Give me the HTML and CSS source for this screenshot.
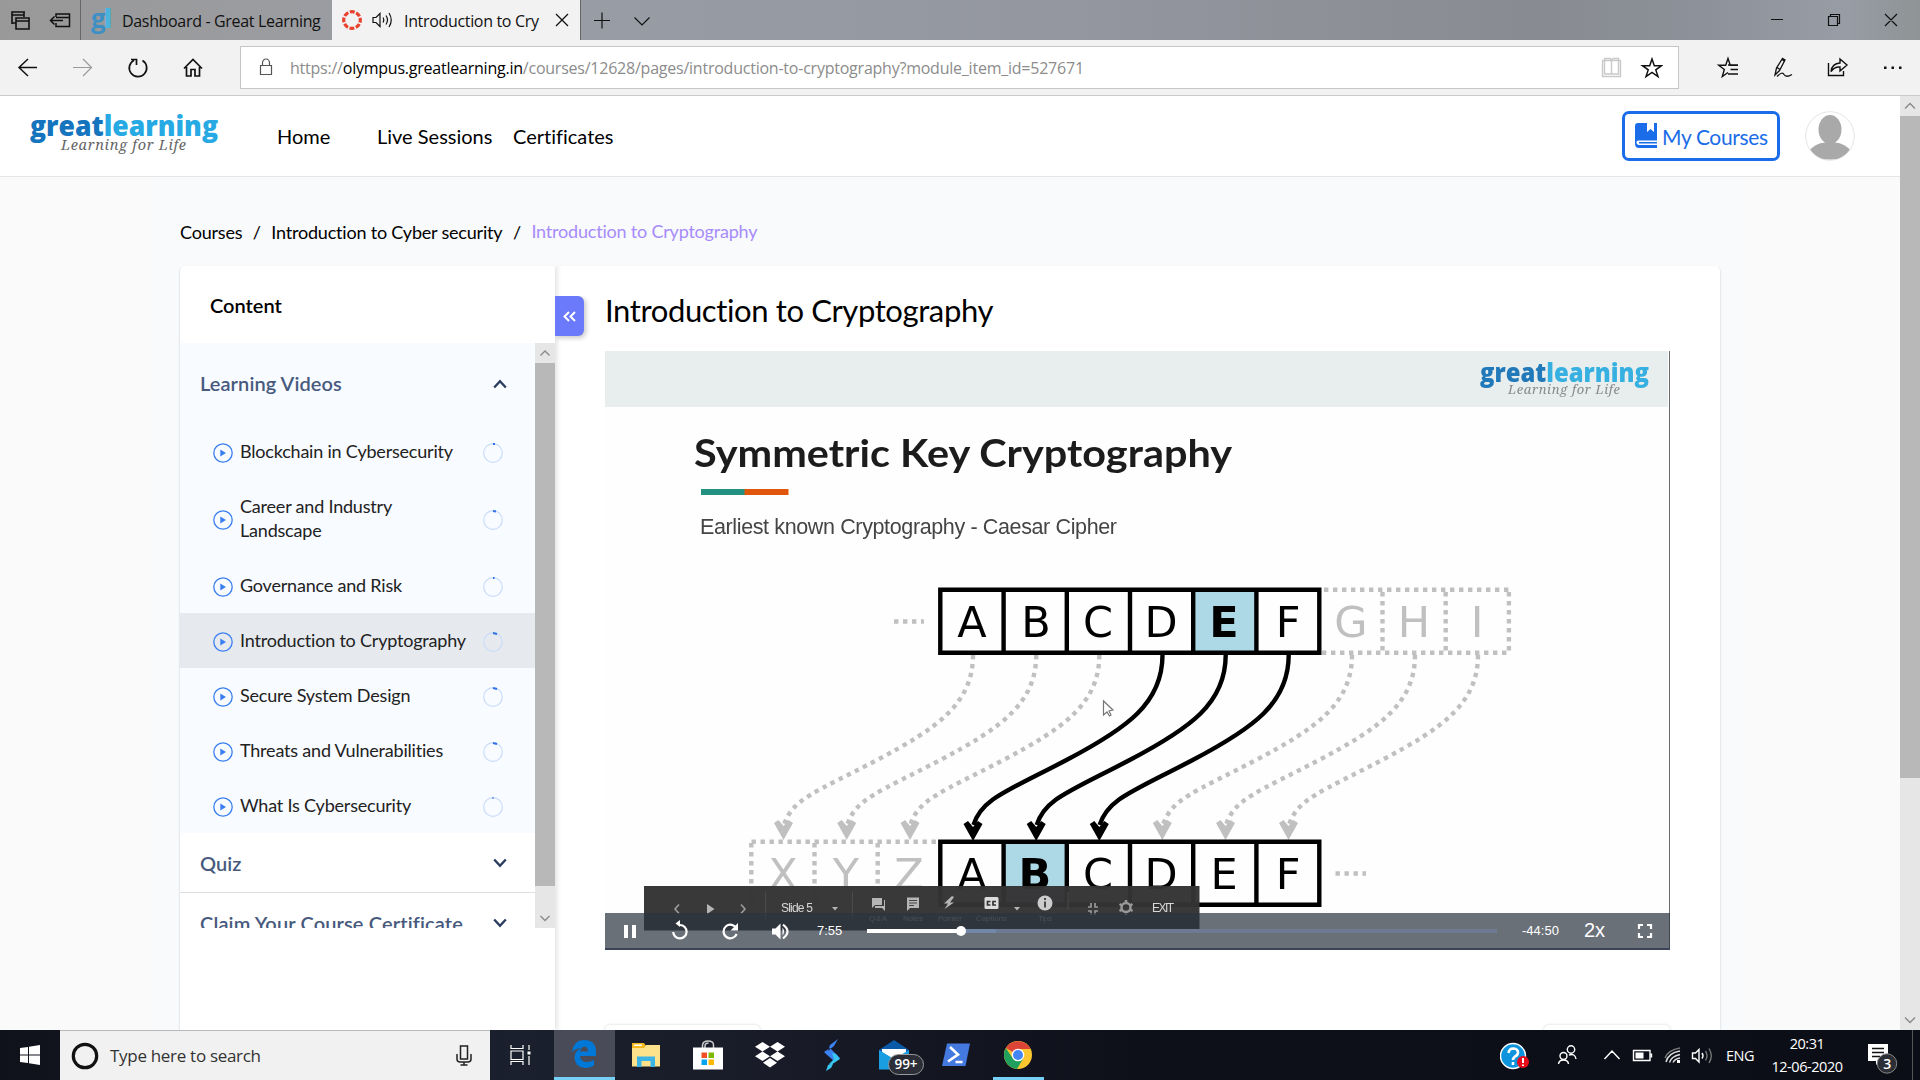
FILE: index.html
```html
<!DOCTYPE html>
<html lang="en">
<head>
<meta charset="utf-8">
<title>Introduction to Cryptography</title>
<link rel="stylesheet" href="styles.css">
</head>
<body>
<div class="desktop">
  <div class="tabstrip">
    <div class="strip-tools">
      <svg width="80" height="40" class="ic"><path d="M12 24V12H25M12 12V23H16M12 15H24V17M16 18H29V29H16ZM16 21H29M24 12V15" stroke-width="1.6"/><path d="M56 17V14H69.500V26.500H56V23M56 17.500H69M50.500 20.500H63M54.500 16.500L50.500 20.500L54.500 24.500" stroke-width="1.5"/></svg>
    </div>
    <div class="tab tab-idle">
      <span class="gl">g<b>l</b></span>
      <span class="tab-text">Dashboard - Great Learning</span>
    </div>
    <div class="tab tab-live">
      <svg width="20" height="20" viewBox="0 0 20 20"><circle cx="10" cy="10" r="8.300" fill="none" stroke="#e8422f" stroke-width="3.200" stroke-dasharray="4.920 1.600" stroke-dashoffset="2.460"/></svg>
      <svg class="ic speaker" width="22" height="20" viewBox="0 0 22 20"><path d="M1 7.500H4L8 3.500V16.500L4 12.500H1ZM11 7.500Q12.500 10 11 12.500M14 5.500Q17 10 14 14.500M17 3Q21.500 10 17 17"/></svg>
      <span class="tab-text live-text">Introduction to Cry</span>
      <svg class="ic" width="14" height="14" viewBox="0 0 14 14"><path d="M1 1L13 13M13 1L1 13" stroke-width="1.300"/></svg>
    </div>
    <svg class="ic strip-add" width="60" height="20" viewBox="0 0 60 20"><path d="M1 10.500H17M9 2.500V18.500M41.500 7.500L49 15L56.500 7.500" stroke-width="1.200"/></svg>
    <svg class="ic win-controls" width="130" height="20" viewBox="0 0 130 20"><path d="M1 9.500H13M58.500 6.500H67.500V15.500H58.500ZM60.500 6V4.500H69.500V13.500H68M115 4L127 16M127 4L115 16" stroke-width="1.200"/></svg>
  </div>

  <div class="toolbar">
    <svg class="ic nav-icons" width="240" height="44" viewBox="0 0 240 44">
      <path d="M19 21.500H37M28 13L19 21.500L28 30" stroke-width="1.500"/>
      <path d="M73 21.500H91.500M83 13L91.500 21.500L83 30" stroke="#9a9a9a" stroke-width="1.200"/>
      <path d="M134 14.200A8.700 8.700 0 1 0 142.500 14.500M131 13.500H136.500V19" stroke-width="1.700"/>
      <path d="M184 22.500L193 13.500L202 22.500M186.500 21V30H191V23.500H195V30H199.500V21" stroke-width="1.700"/>
    </svg>
    <div class="address">
      <svg class="ic lock" width="14" height="18" viewBox="0 0 14 18"><path d="M1.500 7.500H12.500V16.500H1.500ZM3.500 7V5A3.500 4 0 0 1 10.500 5V7" stroke="#555" stroke-width="1.200"/></svg>
      <span class="url">https://<b>olympus.greatlearning.in</b>/courses/12628/pages/introduction-to-cryptography?module_item_id=527671</span>
      <svg class="ic addr-end" width="62" height="22" viewBox="0 0 62 22"><path d="M1.500 3.500H19.500V19.500H1.500ZM3.500 1.500H9L10.500 3L12 1.500H17.500V17H3.500ZM10.500 3V17" stroke="#c9c9c9" stroke-width="1.400"/><path d="M51 2L53.300 8.700H60.500L54.800 12.900L57 19.500L51 15.400L45 19.500L47.200 12.900L41.500 8.700H48.700Z" stroke-width="1.500"/></svg>
    </div>
    <svg class="ic tool-end" width="241" height="44" viewBox="0 0 241 44">
      <path d="M59 19.300H51.300L49 12.500L46.700 19.300H39.700L45.300 23.500L43.300 30.500L49 26.500M49 19H59M51.500 23.500H59M49 28H59" stroke-width="1.400"/>
      <path d="M96 29L97.500 22L103.500 12.500L106 14L100.500 24.500L96 29ZM98 21.500L101 23.500M103 13L105 15M98 30.500Q103.500 25 105 28.500Q107 32 113 28.500" stroke-width="1.300"/>
      <path d="M149.500 17V29.500H164.500V25M152 25.500Q153 17.500 161 17V13L168 19L161 25V21Q155.500 20.500 152 25.500Z" stroke-width="1.400"/>
      <path d="M205 20.500H207.500V23H205ZM212.500 20.500H215V23H212.500ZM220 20.500H222.500V23H220Z" fill="#111" stroke="none"/>
    </svg>
  </div>

  <div class="viewport">
    <div class="page">
      <header class="site-head">
        <svg class="logo" width="190" height="42" viewBox="0 0 190 42">
          <text class="logo-word" x="0" y="22" textLength="188" lengthAdjust="spacingAndGlyphs"><tspan fill="#1474bd">great</tspan><tspan fill="#27aae3">learning</tspan></text>
          <text class="logo-tag" x="31" y="36" textLength="125">Learning for Life</text>
        </svg>
        <nav class="nav"><a class="n1">Home</a><a class="n2">Live Sessions</a><a class="n3">Certificates</a></nav>
        <a class="my-courses">
          <svg width="22" height="26" viewBox="0 0 22 26"><path fill="#1a6ce8" fill-rule="evenodd" d="M3 0H12V9L15.500 6L19 9V0H22V17.500H3.500Q1 18 1.500 20Q2 22 4 22H22V25H4Q0 25 0 20.500V3Q0 0 3 0ZM4 19H22V20.500H4Z"/></svg>
          <span>My Courses</span>
        </a>
        <svg class="avatar" width="50" height="50" viewBox="0 0 50 50"><defs><clipPath id="av"><circle cx="25" cy="25" r="24"/></clipPath></defs><circle cx="25" cy="25" r="24.300" fill="#fff" stroke="#e4e4e4"/><g clip-path="url(#av)" fill="#a9a9a9"><ellipse cx="25" cy="18.500" rx="11.500" ry="14.500"/><path d="M3 41Q10 32 20 31.500H30Q40 32 47 41L40 48.500H10Z"/></g></svg>
      </header>

      <div class="body">
        <div class="crumbs"><span class="c1">Courses</span><i>/</i><span class="c2">Introduction to Cyber security</span><i>/</i><span class="c3">Introduction to Cryptography</span></div>
        <div class="card">
          <aside class="side">
            <h2>Content</h2>
            <div class="side-scroll">
              <div class="list">
                <section class="open">
                  <div class="group first"><span class="g1">Learning Videos</span><svg class="chev" width="14" height="10" viewBox="0 0 14 10"><path d="M1.200 8.500L7 2.200L12.800 8.500"/></svg></div>
                  <div class="row"><svg class="play"><use href="#play"/></svg><span>Blockchain in Cybersecurity</span><svg class="ring"><use href="#ring"/><path d="M10 1H12"/></svg></div>
                  <div class="row tall"><svg class="play"><use href="#play"/></svg><span>Career and Industry<br>Landscape</span><svg class="ring"><use href="#ring"/><path d="M10 1L13 1.400"/></svg></div>
                  <div class="row"><svg class="play"><use href="#play"/></svg><span>Governance and Risk</span><svg class="ring"><use href="#ring"/><path d="M10 1H11.500"/></svg></div>
                  <div class="row on"><svg class="play"><use href="#play"/></svg><span>Introduction to Cryptography</span><svg class="ring"><use href="#ring"/><path d="M10 1L14 2"/></svg></div>
                  <div class="row"><svg class="play"><use href="#play"/></svg><span>Secure System Design</span><svg class="ring"><use href="#ring"/><path d="M10 1L14 2"/></svg></div>
                  <div class="row"><svg class="play"><use href="#play"/></svg><span>Threats and Vulnerabilities</span><svg class="ring"><use href="#ring"/><path d="M10 1L14 2"/></svg></div>
                  <div class="row"><svg class="play"><use href="#play"/></svg><span>What Is Cybersecurity</span><svg class="ring"><use href="#ring"/><path d="M9.500 1H10.500"/></svg></div>
                </section>
                <div class="group"><span class="g2">Quiz</span><svg class="chev" width="14" height="10" viewBox="0 0 14 10"><path d="M1.200 1.500L7 7.800L12.800 1.500"/></svg></div>
                <div class="group"><span class="g3">Claim Your Course Certificate</span><svg class="chev" width="14" height="10" viewBox="0 0 14 10"><path d="M1.200 1.500L7 7.800L12.800 1.500"/></svg></div>
              </div>
              <div class="bar side-bar"><svg class="arrow"><path d="M5.500 12.500L10 8L14.500 12.500"/></svg><div class="thumb"></div><svg class="arrow"><path d="M5.500 8L10 12.500L14.500 8"/></svg></div>
            </div>
          </aside>
          <div class="toggle"><svg width="13" height="11" viewBox="0 0 13 11"><path d="M6 1L1.500 5.500L6 10M12 1L7.500 5.500L12 10" fill="none" stroke="#fff" stroke-width="2"/></svg></div>
          <main class="main">
            <h1>Introduction to Cryptography</h1>
            <div class="video">
              <svg class="slide" width="1065" height="599" viewBox="605 351 1065 599">
                <defs>
                  <path id="curve" d="M0 2C0 50-35 75-96 107S-181 146-189 172"/>
                  <path id="head" d="M-9.500-16L-5-19L0-13L5-19L9.500-16L0 1Z"/>
                  <filter id="soft" x="-2%" y="-2%" width="104%" height="104%"><feGaussianBlur stdDeviation="0.700"/></filter>
                </defs>
                <rect x="605" y="351" width="1065" height="599" fill="#fefefe"/>
                <g filter="url(#soft)">
                  <rect x="605" y="350" width="1063" height="57" fill="#e8eded"/>
                  <text class="logo-word small" x="1480" y="382" textLength="169" lengthAdjust="spacingAndGlyphs"><tspan fill="#2079ba">great</tspan><tspan fill="#36b0e0">learning</tspan></text>
                  <text class="logo-tag small" x="1508" y="394" textLength="112">Learning for Life</text>
                  <text class="s-title" x="694" y="467" textLength="538" lengthAdjust="spacingAndGlyphs">Symmetric Key Cryptography</text>
                  <rect x="701" y="489" width="44" height="6" fill="#20917f"/><rect x="744.500" y="489" width="44" height="6" fill="#e0560f"/>
                  <text class="s-sub" x="700" y="534" textLength="417">Earliest known Cryptography - Caesar Cipher</text>
                  <rect x="1193.200" y="590" width="63" height="63" fill="#add8e6"/><rect x="1003.600" y="842" width="63" height="63" fill="#add8e6"/>
                  <g fill="none" stroke="#c0c0c0" stroke-width="4.400" stroke-dasharray="4.400 4.600">
                    <path d="M894 621.500H924M1335.500 873.500H1366M1324 589.700H1509M1322 652.700H1509M1382.500 592V652M1445.700 592V652M1508.900 592V652M751.500 841.700H938M751.300 843V905M814.500 843V905M877.700 843V905M751.500 904.700H938"/>
                    <use href="#curve" x="973" y="653"/><use href="#curve" x="1036.200" y="653"/><use href="#curve" x="1099.300" y="653"/>
                    <use href="#curve" x="1352" y="653"/><use href="#curve" x="1415" y="653"/><use href="#curve" x="1478" y="653"/>
                  </g>
                  <g fill="#c0c0c0"><use href="#head" x="783.500" y="839"/><use href="#head" x="846.700" y="839"/><use href="#head" x="910" y="839"/><use href="#head" x="1162.300" y="839"/><use href="#head" x="1225.500" y="839"/><use href="#head" x="1288.500" y="839"/></g>
                  <g fill="none" stroke="#000" stroke-width="4.400">
                    <path d="M940.300 589.700H1319.300V652.700H940.300ZM1003.600 589V653M1066.800 589V653M1130 589V653M1193.200 589V653M1256.400 589V653"/>
                    <path d="M940.300 841.700H1319.300V904.700H940.300ZM1003.600 841V905M1066.800 841V905M1130 841V905M1193.200 841V905M1256.400 841V905"/>
                    <use href="#curve" x="1162.500" y="653"/><use href="#curve" x="1225.700" y="653"/><use href="#curve" x="1288.700" y="653"/>
                  </g>
                  <g fill="#000"><use href="#head" x="973" y="840"/><use href="#head" x="1036.200" y="840"/><use href="#head" x="1099.300" y="840"/></g>
                  <g class="cell">
                    <text x="972" y="637">A</text><text x="1036" y="637">B</text><text x="1098" y="637">C</text><text x="1161" y="637">D</text><text x="1224" y="637" class="heavy">E</text><text x="1288" y="637">F</text>
                    <text x="972" y="889">A</text><text x="1035" y="889" class="heavy">B</text><text x="1098" y="889">C</text><text x="1161" y="889">D</text><text x="1224" y="889">E</text><text x="1288" y="889">F</text>
                    <g class="dim"><text x="1351" y="637">G</text><text x="1414" y="637">H</text><text x="1477" y="637">I</text><text x="783" y="889">X</text><text x="846" y="889">Y</text><text x="909" y="889">Z</text></g>
                  </g>
                  <path d="M1103.500 701V715L1107 712L1109.500 716L1111 715L1109 711L1113 710Z" fill="#fff" stroke="#777" stroke-width="1.200"/>
                  <rect x="644" y="886" width="555.500" height="44.500" fill="#343434" opacity=".97"/>
                  <g fill="none" stroke="#999" stroke-width="1.700"><path d="M679 904.500L675 909L679 913.500M741 904.500L745 909L741 913.500"/><path d="M1088 907H1091V903M1098 907H1095V903M1088 911H1091V915M1098 911H1095V915"/><circle cx="1126" cy="907.500" r="4.500" stroke-width="2.500"/><path d="M1126 900V903M1126 912V915M1119.500 904L1122 905.500M1132.500 904L1130 905.500M1119.500 911L1122 909.500M1132.500 911L1130 909.500" stroke-width="2.500"/></g>
                  <path d="M765.500 892V922M852.500 892V922M1068 892V910" stroke="#4b4b4b" stroke-width="1"/>
                  <g fill="#b5b5b5"><path d="M707 904L714.500 909L707 914ZM832 907H838L835 910.500ZM1014 907H1020L1017 910.500ZM872 898H882V905H875L872 908ZM884 900H885V911L882 908H875V906H884ZM907 897.500H919V908H910L907 911ZM952 896L944 903.500H948L944.500 909L954 902.500H950L954 897Z"/><rect x="984.500" y="897" width="14" height="12" rx="1.500" fill="#ddd"/><circle cx="1045" cy="903" r="7.500" fill="#ccc"/></g>
                  <path d="M909 900.500H917M909 903H917M909 905.500H914" stroke="#444"/>
                  <path d="M990.500 901.500H987.500V905H990.500M996 901.500H993V905H996M1045 898V900M1045 901.500V907.500" fill="none" stroke="#333" stroke-width="1.700"/>
                  <g class="deck"><text x="781" y="911.500" textLength="32">Slide 5</text><text x="1152" y="912" textLength="22">EXIT</text></g>
                  <g class="deck-dim"><text x="869" y="920.500" textLength="18">Q &amp; A</text><text x="903" y="920.500" textLength="20">Notes</text><text x="938" y="920.500" textLength="24">Pointer</text><text x="976" y="920.500" textLength="31">Captions</text><text x="1038" y="920.500" textLength="14">Tips</text></g>
                </g>
                <path d="M1669.500 351V950" stroke="#6c6c6c"/>
              </svg>
              <div class="controls">
                <svg width="212" height="35" viewBox="605 913 212 35"><path fill="#fff" d="M624 925H628V938H624ZM632 925H636V938H632ZM772 928.500H775.500L780.500 923.500V939.500L775.500 934.500H772ZM782.500 927.500Q785.500 931.500 782.500 935.500ZM680 920V927L675.500 923.500ZM738 923V930.500H730.500Z"/><path fill="none" stroke="#fff" stroke-width="2.200" d="M680 925A6.700 6.700 0 1 1 673.200 932M736.500 928.500A6.800 6.800 0 1 0 736.700 934M783 924.700Q792 931.500 783 938.300"/></svg>
                <span class="t-now">7:55</span>
                <div class="track"><div class="buffer" style="width:129px"></div><div class="played" style="width:94px"></div><div class="knob" style="left:89px"></div></div>
                <span class="t-left">-44:50</span><span class="rate">2x</span>
                <svg width="16" height="16" viewBox="0 0 16 16"><path d="M2 6V2H6M10 2H14V6M14 10V14H10M6 14H2V10" fill="none" stroke="#fff" stroke-width="2.200"/></svg>
              </div>
            </div>
            <div class="pager"><div class="prev"></div><div class="next"></div></div>
          </main>
        </div>
      </div>
    </div>
    <div class="bar page-bar"><svg class="arrow"><path d="M5 12.500L10 7.500L15 12.500"/></svg><div class="thumb"></div><svg class="arrow"><path d="M5 7.500L10 12.500L15 7.500"/></svg></div>
  </div>

  <div class="taskbar">
    <div class="start"><svg width="20" height="20" viewBox="0 0 20 20"><path fill="#fff" d="M0 3L8 1.900V9.500H0ZM9 1.700L20 0V9.500H9ZM0 10.500H8V18.100L0 17ZM9 10.500H20V20L9 18.300Z"/></svg></div>
    <div class="search">
      <svg width="28" height="28" viewBox="0 0 28 28"><circle cx="14" cy="14" r="11.700" fill="none" stroke="#111" stroke-width="3.200"/></svg>
      <span>Type here to search</span>
      <svg class="mic" width="16" height="21" viewBox="0 0 16 21"><path fill="none" stroke="#222" stroke-width="1.500" d="M4.500 1H11.500V14H4.500ZM1 9V14Q1 17 4 17H12Q15 17 15 14V9M8 17V20M4.500 20H11.500"/></svg>
    </div>
    <div class="app taskview"><svg width="22" height="20" viewBox="0 0 22 20"><path fill="none" stroke="#fff" stroke-width="1.200" d="M1 0V3.500H13V0M1 6H13V14.500H1ZM1 20V16.500H13V20M19 0V5M19 11V20"/><path fill="#fff" d="M17.500 6.500H20.500V9.500H17.500Z"/></svg></div>
    <div class="app edge"><svg width="26" height="30" viewBox="0 0 26 30"><path fill="#0078d7" d="M1 13Q3 1 13 1Q25 1 25 13V17H9Q9.500 23 16 23Q20 23 23 21V26.500Q19 29 14 29Q3.500 28 3.500 18Q4 12 10 9Q4.500 9.500 1 13ZM9 12.500H17Q17 8 13.500 7.500Q10 8 9 12.500Z"/></svg></div>
    <div class="app"><svg width="28" height="25" viewBox="0 0 28 25"><path fill="#f5b81d" d="M0 0H12L14 3V8H0Z"/><path fill="#fde28b" d="M0 5H12L14 2H28V23.500H0Z"/><path fill="#fff" d="M2 1.500H10V3H2Z"/><path fill="#3cb4e6" d="M5 24V13.500H23V24H18.500V18H9.500V24Z"/></svg></div>
    <div class="app"><svg width="30" height="30" viewBox="0 0 30 30"><path fill="none" stroke="#ccc" stroke-width="1.500" d="M9.500 8V5Q10 1 15 1Q20.500 1 20.500 5V8M12 8V6Q12 3 15.500 3"/><path fill="#fff" d="M0 7.500H30V29.500H0Z"/><path fill="#f25022" d="M8.500 12.500H14V18H8.500Z"/><path fill="#7fba00" d="M15.500 12.500H21V18H15.500Z"/><path fill="#00a4ef" d="M8.500 19.500H14V25H8.500Z"/><path fill="#ffb900" d="M15.500 19.500H21V25H15.500Z"/></svg></div>
    <div class="app"><svg width="30" height="28" viewBox="0 0 30 28"><path fill="#fff" d="M7.500 1L15 5.700L7.500 10.500L0 5.700ZM22.500 1L30 5.700L22.500 10.500L15 5.700ZM7.500 10.500L15 15.200L7.500 20L0 15.200ZM22.500 10.500L30 15.200L22.500 20L15 15.200ZM15 17L22 21.700L15 26.500L8 21.700Z"/></svg></div>
    <div class="app"><svg width="16" height="32" viewBox="0 0 16 32"><path fill="#3c82f0" d="M14 0L6 6L4 12L10 7ZM0 13L6 9L11 14L16 19L10 22L2 15Z"/><path fill="#38c6f0" d="M8 14L12 15L16 20L10 24L5 25L10 20ZM2 32L4 26L10 23L7 29Z"/></svg></div>
    <div class="app mail"><svg width="30" height="30" viewBox="0 0 30 30"><path fill="#0a5aa8" d="M0 10L15 0L30 10V20H0Z"/><path fill="#fff" d="M3 9H27V22H3Z"/><path fill="#1b9de2" d="M0 10L15 19L30 10V29.500H0Z"/></svg><b>99+</b></div>
    <div class="app"><svg width="28" height="24" viewBox="0 0 28 24"><path fill="#4479e0" d="M5 .5H28L23.500 23H0Z"/><path fill="none" stroke="#fff" stroke-width="2.600" d="M8 4L16 11.500L6 18.500M13.500 19H20.500"/></svg></div>
    <div class="app chrome"><svg width="28" height="28" viewBox="0 0 28 28"><circle cx="14" cy="14" r="14" fill="#fbc62f"/><path fill="#db4437" d="M14 14L1.900 7A14 14 0 0 1 26.500 8H14Z"/><path fill="#20a05c" d="M1.900 7A14 14 0 0 0 13 28L19.500 17L14 20L8.500 17Z"/><circle cx="14" cy="14" r="6.300" fill="#fff"/><circle cx="14" cy="14" r="5" fill="#4385f5"/></svg></div>
    <div class="tray">
      <svg class="ti" width="226" height="50" viewBox="1500 1030 226 50">
        <circle cx="1513" cy="1056" r="12.500" fill="#0d94dd" stroke="#fff" stroke-width="1.500"/><path d="M1508.500 1053Q1509 1048.500 1513.500 1048.500Q1518 1049 1518 1052.500Q1518 1055 1515 1056.500Q1513 1058 1513 1060M1513 1062V1065" fill="none" stroke="#fff" stroke-width="2.600"/><circle cx="1523" cy="1062" r="6" fill="#e90b18"/><path d="M1523 1058V1063M1523 1064.500V1066" stroke="#fff" stroke-width="2"/>
        <g fill="none" stroke="#fff" stroke-width="1.400"><circle cx="1571" cy="1049.500" r="3.700"/><circle cx="1563.500" cy="1056" r="3.500"/><path d="M1558.500 1064Q1559 1060 1563.500 1060Q1568 1060 1568.500 1064M1569 1055Q1575 1053 1576 1059M1604.500 1059L1612 1051L1619.500 1059M1633.500 1050.500H1650V1060.500H1633.500ZM1651.500 1053.500V1057.500"/><path d="M1692.500 1053H1695.500L1699 1049.500V1062L1695.500 1058.500H1692.500ZM1702 1053Q1704 1055.700 1702 1058.500"/><path d="M1666 1062Q1668 1053 1680 1051M1669.500 1062.500Q1671 1056.500 1680 1054.500M1673 1062.500Q1674.500 1059 1680 1058" stroke="#ddd"/><path d="M1665 1058Q1668 1050 1680 1048M1705.500 1051Q1708.500 1055.700 1705.500 1060.500M1709 1048.500Q1713.500 1055.700 1709 1063" stroke="#777"/></g><path fill="#fff" d="M1635.500 1052.500H1643.500V1058.500H1635.500ZM1677 1060H1680V1063H1677Z"/>
      </svg>
      <span class="lang">ENG</span>
      <div class="clock"><span>20:31</span><span>12-06-2020</span></div>
      <svg class="note" width="34" height="36" viewBox="0 0 34 36"><path fill="#fff" d="M2 3H22V20H14L10 24V20H2Z"/><path stroke="#111" stroke-width="1.300" d="M6 7.500H18M6 11.500H18M6 15.500H14"/><circle cx="21" cy="22.500" r="9.700" fill="#2c2e35" stroke="#888"/><text x="21" y="28" text-anchor="middle">3</text></svg>
    </div>
  </div>
</div>
<svg class="defs" width="0" height="0">
  <symbol id="play" viewBox="0 0 20 20"><circle cx="10" cy="10" r="9.200" fill="none" stroke="#3a7ff0" stroke-width="1.300"/><path d="M7.300 6.500L13 10L7.300 13.500Z" fill="#3a7ff0"/></symbol>
  <symbol id="ring" viewBox="0 0 20 20"><circle cx="10" cy="10" r="9.300" fill="none" stroke="#c9dcfa" stroke-width="1.200"/></symbol>
</svg>
</body>
</html>
```
FILE: styles.css
```css
* { box-sizing: border-box; }
body { margin: 0; font-family: Lato, "Liberation Sans", sans-serif; color: #111; overflow: hidden; font-variant-ligatures: none; }
h1, h2 { margin: 0; font-weight: 400; }
svg { display: block; flex: none; }
span { white-space: nowrap; }
.defs { position: absolute; }
.desktop { width: 1920px; height: 1080px; display: flex; flex-direction: column; overflow: hidden; }
.ic { fill: none; stroke: #111; stroke-width: 1.2; }

/* browser chrome */
.tabstrip { height: 40px; flex: none; display: flex; align-items: center; background: linear-gradient(90deg, #999 0, #9b9ca0 15%, #989ca5 30%, #9497a0 55%, #888b91 80%, #8c9098 88%, #989ca5 96%, #8f9496 100%); font-family: "Open Sans", "Noto Sans", sans-serif; }
.strip-tools { width: 81px; height: 40px; border-right: 1px solid #65666a; }
.tab { height: 40px; display: flex; align-items: center; }
.tab-idle { width: 251px; padding-left: 10px; }
.tab-live { width: 249px; padding-left: 10px; background: #f2f2f2; border-right: 1px solid #666; }
.gl { width: 31px; font: 700 26px/32px "Open Sans", sans-serif; letter-spacing: -2px; color: #3d8fc4; height: 36px; }
.gl b { color: #4bb4de; }
.tab-text { font-size: 16px; width: 199px; letter-spacing: -.33px; padding-top: 1px; }
.live-text { width: 151px; }
.speaker { margin: 0 10px 0 10px; }
.strip-add { margin-left: 12px; }
.win-controls { margin-left: auto; margin-right: 20px; }
.toolbar { height: 56px; flex: none; display: flex; align-items: center; background: #f2f2f2; border-bottom: 1px solid #cbcbcb; }
.nav-icons { margin-bottom: -1px; }
.address { width: 1439px; height: 43px; background: #fff; border: 1px solid #c6c6c6; display: flex; align-items: center; font-family: "Open Sans", sans-serif; }
.lock { margin: -2px 17px 0 18px; }
.url { font-size: 16px; letter-spacing: -.23px; color: #8c8c8c; }
.url b { font-weight: 400; color: #000; }
.addr-end { margin-left: auto; margin-right: 15px; }

/* page */
.viewport { flex: 1; display: flex; min-height: 0; }
.page { width: 1900px; display: flex; flex-direction: column; background: #fafafa; }
.site-head { height: 81px; flex: none; background: #fff; border-bottom: 1px solid #e6e6e6; display: flex; align-items: flex-start; padding: 15px 45px 0 30px; }
.logo { margin-top: 3px; overflow: visible; }
.logo-word { font: 800 29px "Open Sans", sans-serif; }
.logo-tag { font: italic 14.5px "Noto Serif", "Liberation Serif", serif; fill: #666; }
.logo-word.small { font-size: 26px; }
.logo-tag.small { font-size: 13px; fill: #888; }
.nav { display: flex; margin-left: 57px; font-size: 20px; line-height: 24px; padding-top: 13px; color: #000; }
.n1 { width: 100px; }
.n2 { width: 136px; }
.my-courses { margin-left: auto; width: 158px; height: 50px; border: 3px solid #1a6ce8; border-radius: 7px; display: flex; align-items: center; padding-left: 10px; gap: 5px; color: #1a6ce8; font-size: 21px; letter-spacing: -.35px; }
.my-courses svg { margin-top: -1px; }
.avatar { margin-left: 25px; }
.body { flex: 1; display: flex; flex-direction: column; margin: 0 155px; padding: 42px 25px 0; background: #f8fafc; min-height: 0; }
.crumbs { display: flex; font-size: 18px; line-height: 26px; height: 47px; color: #000; letter-spacing: -.2px; }
.crumbs i { width: 29px; text-align: center; font-style: normal; }
.c3 { color: #a78bfa; margin-top: -1px; }
.card { flex: 1; min-height: 0; display: flex; background: #fff; border-radius: 5px 5px 0 0; box-shadow: 0 1px 2px rgba(0,20,60,.28); }
.side { width: 375px; box-shadow: 2px 0 5px rgba(0,0,0,.12); clip-path: inset(0 -8px 0 0); }
.side h2 { height: 77px; padding: 26px 0 0 30px; font-size: 20px; line-height: 26px; font-weight: 600; color: #000; }
.side-scroll { height: 585px; display: flex; overflow: hidden; }
.list { width: 355px; overflow: hidden; }
.open { background: #f8fbff; }
.group { height: 60px; display: flex; align-items: center; justify-content: space-between; padding: 1px 28px 0 20px; border-bottom: 1px solid #dcdfe3; font-size: 20px; font-weight: 600; color: #475a7d; letter-spacing: .08px; }
.group.first { height: 81px; border: 0; padding-top: 0; }
.group span { margin-top: -1px; }
.g3 { letter-spacing: .13px; }
.chev { fill: none; stroke: #2c3e60; stroke-width: 2.4; }
.row { height: 55px; display: flex; align-items: center; padding: 3px 32px 0 33px; font-size: 18px; line-height: 24px; color: #222; letter-spacing: -.2px; }
.row span { margin: -4px 0 0 7px; flex: 1; }
.row.tall { height: 79px; }
.row.on { background: #e6eaef; }
.play, .ring { width: 20px; height: 20px; }
.ring path { stroke: #2f72e8; stroke-width: 2; fill: none; }
.bar { width: 20px; display: flex; flex-direction: column; background: #e6e6e6; }
.thumb { background: #b8b8b8; }
.side-bar .thumb { height: 523px; }
.page-bar .thumb { height: 662px; }
.arrow { width: 20px; height: 20px; fill: none; stroke: #888; stroke-width: 1.3; }
.arrow:last-child { margin-top: auto; }
.toggle { width: 29px; height: 40px; margin-top: 30px; background: #6b7afa; border-radius: 0 6px 6px 0; display: grid; place-items: center; box-shadow: 2px 2px 5px rgba(0,0,0,.22); clip-path: inset(0 -8px -8px 0); }
.main { flex: 1; padding: 24px 50px 0 21px; display: flex; flex-direction: column; }
.main h1 { flex: none; font-size: 31px; line-height: 40px; height: 61px; color: #000; letter-spacing: -.38px; }
.video { position: relative; height: 599px; flex: none; }
.s-title { font: 700 38px Lato, sans-serif; fill: #1b1b1b; }
.s-sub { font: 21.5px "Liberation Sans", sans-serif; fill: #444; }
.cell { font: 43px "DejaVu Sans", sans-serif; text-anchor: middle; }
.heavy { font-weight: 700; }
.dim { fill: #c0c0c0; }
.deck { font: 12px "Liberation Sans", sans-serif; fill: #d8d8d8; }
.deck-dim { font: 8px "Liberation Sans", sans-serif; fill: #8c8c8c; }
.controls { position: absolute; left: 0; right: 0; bottom: 0; height: 37px; display: flex; align-items: center; background: rgba(43,51,63,.7); border-bottom: 2px solid #3b4356; color: #fff; font-family: "Liberation Sans", sans-serif; font-size: 13px; }
.t-now { width: 50px; }
.track { position: relative; width: 630px; height: 4px; background: #6c7a93; margin-right: 25px; }
.buffer, .played { position: absolute; left: 0; top: 0; height: 4px; background: #7388a8; }
.played { background: #fff; }
.knob { position: absolute; top: -3px; width: 10px; height: 10px; border-radius: 50%; background: #fff; }
.t-left { width: 62px; }
.rate { width: 53px; font-size: 20px; }
.pager { margin-top: 75px; display: flex; justify-content: space-between; }
.prev, .next { width: 155px; height: 30px; border-radius: 5px; box-shadow: 0 0 3px rgba(0,0,0,.18); }
.next { width: 126px; }

/* taskbar */
.taskbar { height: 50px; flex: none; display: flex; background: linear-gradient(90deg, #10121b 0, #1a202d 27%, #191b28 40%, #0d1019 60%, #0c0e17 100%); font-family: "Open Sans", sans-serif; color: #fff; }
.start { width: 60px; display: grid; place-items: center; }
.search { width: 430px; background: #f1f1f1; border-top: 1px solid #b9b9b9; display: flex; align-items: center; padding-left: 11px; color: #333; font-size: 17px; letter-spacing: -.3px; }
.search span { margin-left: 11px; }
.mic { margin-left: auto; margin-right: 18px; }
.app { width: 62px; display: grid; place-items: center; position: relative; }
.taskview { width: 64px; padding-right: 3px; }
.edge { width: 61px; background: #494c58; border-bottom: 3px solid #76d0f5; padding-right: 1px; }
.mail b { position: absolute; left: 25px; top: 24px; width: 36px; height: 21px; border: 1px solid #999; border-radius: 11px; background: #2b2e36; font-size: 13.5px; font-weight: 600; line-height: 19px; text-align: center; }
.chrome::after { content: ""; position: absolute; left: 6px; bottom: 0; width: 51px; height: 3px; background: #76d0f5; }
.tray { margin-left: auto; width: 420px; display: flex; align-items: center; font-size: 14.5px; letter-spacing: -.45px; }
.lang { width: 41px; }
.clock { width: 80px; display: flex; flex-direction: column; align-items: center; line-height: 23px; margin-right: 19px; }
.note { margin-top: 8px; font: 600 14px "Open Sans", sans-serif; fill: #fff; }
.tray::after { content: ""; width: 1px; height: 50px; background: #555; margin-left: 12px; }
```
